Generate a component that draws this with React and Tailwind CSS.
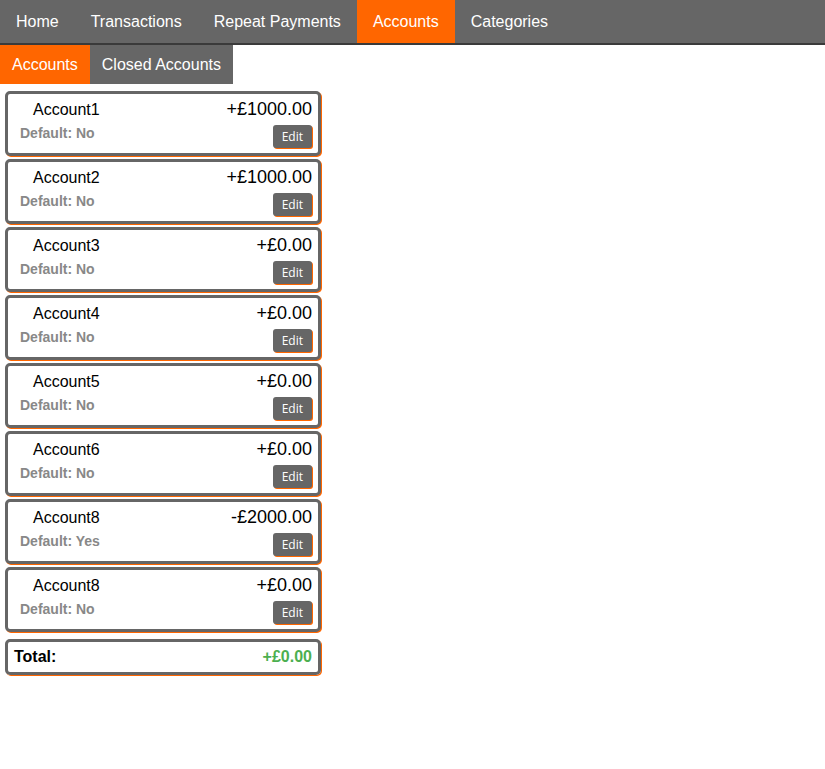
const accounts = [
  { name: "Account1", amount: "+£1000.00", isDefault: false },
  { name: "Account2", amount: "+£1000.00", isDefault: false },
  { name: "Account3", amount: "+£0.00", isDefault: false },
  { name: "Account4", amount: "+£0.00", isDefault: false },
  { name: "Account5", amount: "+£0.00", isDefault: false },
  { name: "Account6", amount: "+£0.00", isDefault: false },
  { name: "Account8", amount: "-£2000.00", isDefault: true },
  { name: "Account8", amount: "+£0.00", isDefault: false },
];

const navItems = ["Home", "Transactions", "Repeat Payments", "Accounts", "Categories"];

const AccountCard = ({ account }) => (
  <div className="w-[316px] border-[3px] border-[#666] rounded-[5px] bg-white shadow-[1px_1px_0_#ff6600] pt-[4px] pb-[5px] pl-[12px] pr-[6px]">
    <div className="flex items-baseline justify-between h-[22px] leading-[22px]">
      <span className="ml-[13px] text-[16px] text-black">{account.name}</span>
      <span className="text-[18px] text-black">{account.amount}</span>
    </div>
    <div className="flex items-start justify-between mt-[5px]">
      <span className="font-bold text-[14px] leading-[17px] text-[#888]">
        Default: {account.isDefault ? "Yes" : "No"}
      </span>
      <button className="h-[23px] px-[9px] bg-[#666] text-white rounded-[3px] shadow-[1px_1px_0_#ff6600] font-['Open_Sans',sans-serif] text-[12px] leading-none">
        Edit
      </button>
    </div>
  </div>
);

export default function App() {
  return (
    <div className="min-h-screen bg-white font-['Liberation_Sans',Arial,sans-serif]">
      {/* main nav */}
      <nav className="flex h-[45px] bg-[#666] border-b-2 border-[#3a3a3a]">
        {navItems.map((item) => (
          <a
            key={item}
            className={`flex items-center px-4 text-[16px] text-white ${
              item === "Accounts" ? "bg-[#ff6600]" : ""
            }`}
          >
            {item}
          </a>
        ))}
      </nav>

      {/* sub nav */}
      <div className="flex h-[39px]">
        <a className="flex items-center pt-[1px] px-3 bg-[#ff6600] text-white text-[16px]">Accounts</a>
        <a className="flex items-center pt-[1px] px-3 bg-[#666] text-white text-[16px]">Closed Accounts</a>
      </div>

      {/* account list */}
      <div className="flex flex-col gap-[3px] ml-[5px] mt-[7px]">
        {accounts.map((a, i) => (
          <AccountCard key={i} account={a} />
        ))}
        <div className="mt-[4px] w-[316px] h-[36px] border-[3px] border-[#666] rounded-[5px] shadow-[1px_1px_0_#ff6600] flex items-center justify-between px-[6px] font-bold text-[16px]">
          <span className="text-black">Total:</span>
          <span className="text-[#4caf50]">+£0.00</span>
        </div>
      </div>
    </div>
  );
}
